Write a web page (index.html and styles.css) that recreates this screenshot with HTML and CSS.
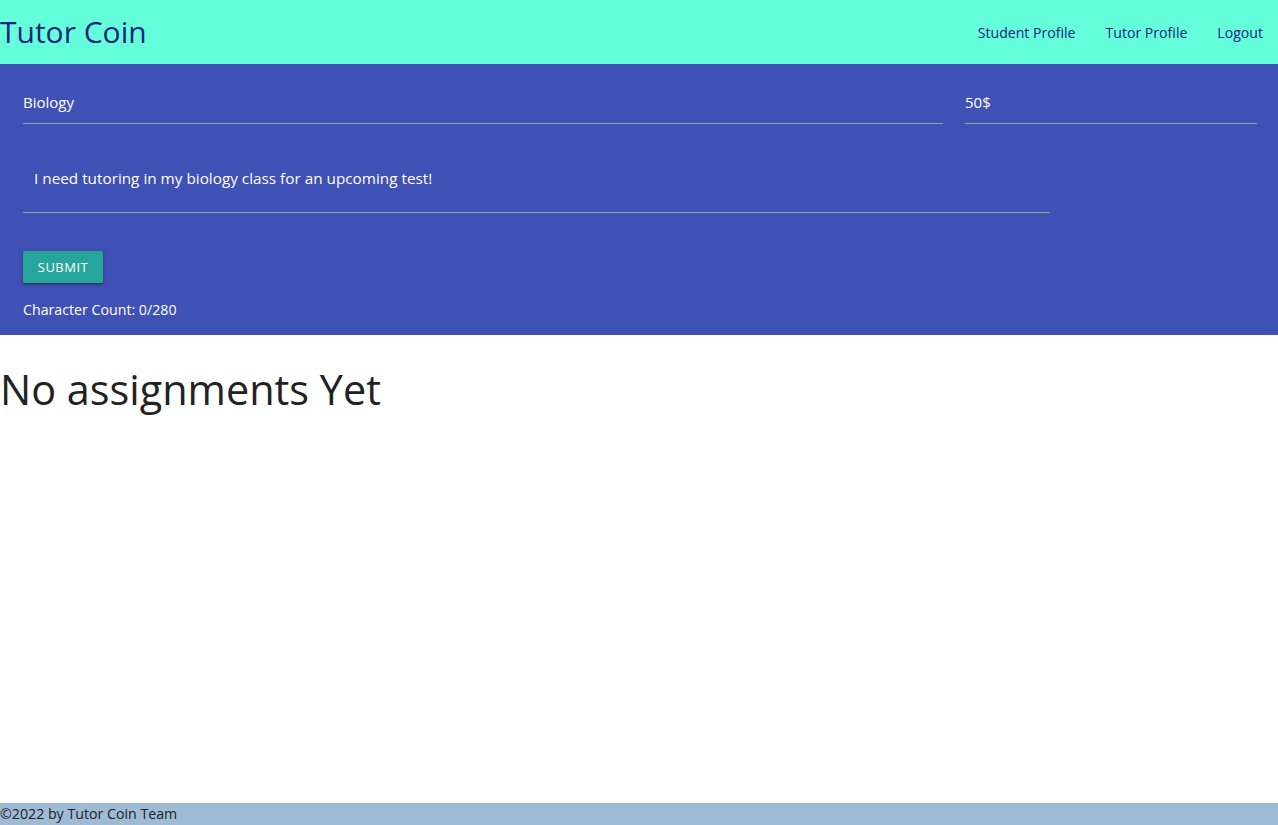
FILE: index.html
```html
<!DOCTYPE html>
<html lang="en">
<head>
<meta charset="utf-8">
<title>Tutor Coin</title>
<link rel="stylesheet" href="styles.css">
</head>
<body>
<nav class="nav">
  <a class="brand" href="#">Tutor Coin</a>
  <ul class="nav-links">
    <li><a href="#">Student Profile</a></li>
    <li><a href="#">Tutor Profile</a></li>
    <li><a href="#">Logout</a></li>
  </ul>
</nav>
<main class="main">
  <section class="post-form">
    <div class="row row-top">
      <div class="col col-9">
        <input class="field" type="text" value="Biology">
      </div>
      <div class="col col-3">
        <input class="field" type="text" value="50$">
      </div>
    </div>
    <div class="row row-text">
      <div class="col col-10">
        <div class="textarea">I need tutoring in my biology class for an upcoming test!</div>
      </div>
    </div>
    <div class="actions">
      <button class="btn" type="button">Submit</button>
      <p class="count">Character Count: 0/280</p>
    </div>
  </section>
  <h3 class="empty">No assignments Yet</h3>
</main>
<footer class="footer">©2022 by Tutor Coin Team</footer>
</body>
</html>
```
FILE: styles.css
```css
html, body {
  margin: 0;
  padding: 0;
}
body {
  font-family: "Open Sans", "Noto Sans", sans-serif;
  font-size: 14px;
  color: #222;
  min-height: 825px;
  display: flex;
  flex-direction: column;
}
.nav {
  height: 64px;
  background: #64ffda;
  display: flex;
  align-items: center;
  justify-content: space-between;
}
.brand {
  color: #1a237e;
  font-size: 30px;
  text-decoration: none;
  line-height: 64px;
}
.nav-links {
  list-style: none;
  margin: 0;
  padding: 0;
  display: flex;
}
.nav-links a {
  display: block;
  padding: 1px 15px 0;
  color: #1a237e;
  text-decoration: none;
  font-size: 14.1px;
  line-height: 64px;
}
.main {
  flex: 1;
}
.post-form {
  background: #3f51b5;
  padding: 14px 10px 0 12px;
  height: 257px;
}
.row {
  display: grid;
  grid-template-columns: repeat(12, 1fr);
}
.col {
  padding: 0 11px;
}
.col-9 { grid-column: span 9; }
.col-3 { grid-column: span 3; }
.col-10 { grid-column: span 10; padding-right: 9px; }
.field {
  box-sizing: border-box;
  width: 100%;
  height: 46px;
  margin: 0;
  padding: 2px 0 0;
  border: 0;
  border-bottom: 1px solid #9e9e9e;
  background: transparent;
  color: #fff;
  font-family: inherit;
  font-size: 15px;
  outline: none;
}
.row-text {
  margin-top: 37px;
}
.textarea {
  height: 52px;
  box-sizing: border-box;
  border-bottom: 1px solid #9e9e9e;
  padding: 6px 0 0 11px;
  color: #fff;
  font-size: 15.3px;
  line-height: 22px;
}
.actions {
  padding: 38px 0 0 11px;
}
.btn {
  display: block;
  width: 80px;
  height: 32px;
  border: 0;
  border-radius: 2px;
  background: #26a69a;
  color: #fff;
  font-family: inherit;
  font-size: 13px;
  letter-spacing: 0.5px;
  text-transform: uppercase;
  padding: 0;
  box-shadow: 0 2px 2px 0 rgba(0,0,0,0.14), 0 3px 1px -2px rgba(0,0,0,0.12), 0 1px 5px 0 rgba(0,0,0,0.2);
}
.count {
  margin: 16px 0 0;
  color: #fff;
  font-size: 14.2px;
  line-height: 22px;
}
.empty {
  margin: 32px 0 0;
  font-size: 41.4px;
  font-weight: 400;
  line-height: 1.1;
  color: #222;
}
.footer {
  height: 22px;
  line-height: 22px;
  background: #9ebbd6;
  font-size: 14.2px;
  color: #222;
}
```
